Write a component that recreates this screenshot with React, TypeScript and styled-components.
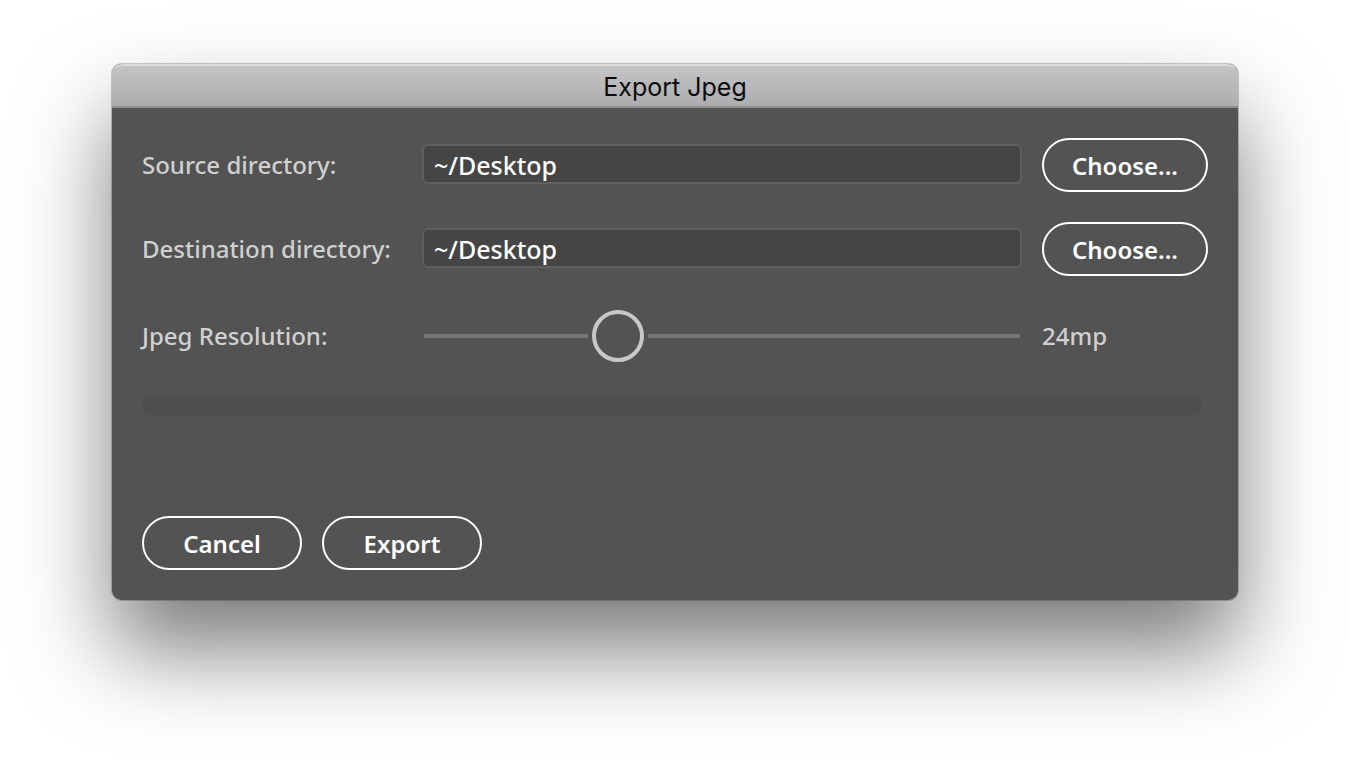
import React, { useState } from "react";
import styled, { createGlobalStyle } from "styled-components";

const GlobalStyle = createGlobalStyle`
  *, *::before, *::after { box-sizing: border-box; }
  body {
    margin: 0;
    background: #ffffff;
    font-family: "Noto Sans", "Open Sans", sans-serif;
  }
`;

const Desktop = styled.main`
  min-height: 100vh;
  padding: 64px 112px 0;
  overflow: hidden;
`;

const Dialog = styled.section`
  border-radius: 10px;
  background: #535353;
  box-shadow:
    0 0 0 1px rgba(0, 0, 0, 0.2),
    0 50px 90px rgba(0, 0, 0, 0.52);
`;

const TitleBar = styled.header`
  display: flex;
  align-items: center;
  justify-content: center;
  height: 44px;
  border-top: 2px solid #dcdcdc;
  border-bottom: 2px solid #909092;
  border-radius: 10px 10px 0 0;
  background: linear-gradient(#c4c4c6, #adadaf);
`;

const Title = styled.h1`
  margin: 0;
  padding-top: 2px;
  color: #0c0c0c;
  font: 400 25px/32px Inter, Roboto, sans-serif;
`;

const Form = styled.form`
  padding: 30px;
`;

const Fields = styled.div`
  display: grid;
  grid-template-columns: 280px 1fr 166px;
  align-items: center;
  row-gap: 30px;
`;

const Label = styled.label`
  color: #d0d0d0;
  font-size: 24px;
  font-weight: 500;
  line-height: 32px;
`;

const PathInput = styled.input`
  width: 100%;
  height: 40px;
  margin: 0 0 2px;
  padding: 2px 10px 0;
  border: 2px solid #5f5f5f;
  border-radius: 6px;
  outline: none;
  background: #454545;
  color: #ffffff;
  font: 500 25px/32px "Noto Sans", "Open Sans", sans-serif;
`;

const FieldCell = styled.div`
  display: flex;
  padding-right: 20px;
`;

const PillButton = styled.button<{ $width: number }>`
  width: ${(p) => p.$width}px;
  height: 54px;
  padding: 2px 0 0;
  border: 2px solid #ffffff;
  border-radius: 27px;
  background: transparent;
  color: #ffffff;
  font: 600 24px/32px "Noto Sans", "Open Sans", sans-serif;
  cursor: pointer;
`;

const Slider = styled.input`
  appearance: none;
  flex: 1;
  min-width: 0;
  height: 60px;
  margin: 0 2px;
  outline: none;
  background: transparent;

  &::-webkit-slider-runnable-track {
    height: 4px;
    background: #757575;
  }

  &::-webkit-slider-thumb {
    appearance: none;
    width: 52px;
    height: 52px;
    margin-top: -24px;
    border: 4px solid #c8c8c8;
    border-radius: 50%;
    background: #535353;
    box-shadow: 0 0 0 4px #535353;
  }
`;

const Resolution = styled.output`
  color: #d0d0d0;
  font-size: 24px;
  font-weight: 500;
  line-height: 32px;
`;

const Progress = styled.progress`
  appearance: none;
  display: block;
  width: calc(100% - 6px);
  height: 20px;
  margin-top: 30px;
  border: none;
  border-radius: 10px;
  overflow: hidden;
  background: #4e4e4e;

  &::-webkit-progress-bar { background: #4e4e4e; }
  &::-webkit-progress-value { background: #c8c8c8; }
`;

const Actions = styled.footer`
  display: flex;
  gap: 20px;
  margin-top: 100px;
`;

export default function App() {
  const [source, setSource] = useState("~/Desktop");
  const [destination, setDestination] = useState("~/Desktop");
  const [megapixels, setMegapixels] = useState(24);

  return (
    <>
      <GlobalStyle />
      <Desktop>
        <Dialog role="dialog" aria-labelledby="title">
          <TitleBar>
            <Title id="title">Export Jpeg</Title>
          </TitleBar>
          <Form onSubmit={(e) => e.preventDefault()}>
            <Fields>
              <Label htmlFor="source">Source directory:</Label>
              <FieldCell>
                <PathInput id="source" type="text" value={source} onChange={(e) => setSource(e.target.value)} />
              </FieldCell>
              <PillButton type="button" $width={166}>Choose...</PillButton>

              <Label htmlFor="destination">Destination directory:</Label>
              <FieldCell>
                <PathInput id="destination" type="text" value={destination} onChange={(e) => setDestination(e.target.value)} />
              </FieldCell>
              <PillButton type="button" $width={166}>Choose...</PillButton>

              <Label htmlFor="resolution">Jpeg Resolution:</Label>
              <FieldCell>
                <Slider
                  id="resolution"
                  type="range"
                  min={3}
                  max={71}
                  value={megapixels}
                  onChange={(e) => setMegapixels(Number(e.target.value))}
                />
              </FieldCell>
              <Resolution htmlFor="resolution">{`${megapixels}mp`}</Resolution>
            </Fields>
            <Progress value={0} max={100} aria-label="Export progress" />
            <Actions>
              <PillButton type="button" $width={160}>Cancel</PillButton>
              <PillButton type="submit" $width={160}>Export</PillButton>
            </Actions>
          </Form>
        </Dialog>
      </Desktop>
    </>
  );
}
